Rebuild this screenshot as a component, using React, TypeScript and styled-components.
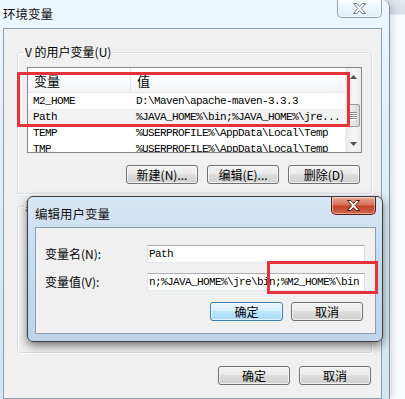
import React from "react";
import styled, { createGlobalStyle } from "styled-components";

const cjk = `"Noto Sans CJK SC", "Liberation Sans", sans-serif`;
const mono = `"Liberation Mono", "Noto Sans CJK SC", monospace`;

const GlobalStyle = createGlobalStyle`
  html, body {
    margin: 0;
    padding: 0;
  }
  body {
    width: 405px;
    height: 399px;
    overflow: hidden;
    font-family: ${cjk};
    font-size: 12px;
    color: #000;
  }
`;

const Desktop = styled.div`
  position: relative;
  width: 405px;
  height: 399px;
  overflow: hidden;
  background: linear-gradient(180deg, #e3e9ef 0, #d6dfe8 14px, #fbfcfd 15px);
`;

const Window = styled.div`
  width: 390px;
  height: 399px;
  box-sizing: border-box;
  padding: 0 7px 0 3px;
  display: flex;
  flex-direction: column;
  background: linear-gradient(180deg, #eef7fd 0%, #e2effa 30%, #d3e4f3 100%);
  border-right: 1px solid #7d8c9c;
  border-radius: 0 7px 0 0;
  box-shadow: 3px 0 6px rgba(0, 0, 0, 0.12);
`;

const TitleBar = styled.div<{ $height: number }>`
  height: ${(p) => p.$height}px;
  flex: none;
  display: flex;
  justify-content: space-between;
  align-items: flex-start;
`;

const Title = styled.div<{ $top: number }>`
  margin-top: ${(p) => p.$top}px;
  font-size: 12.5px;
  line-height: 14px;
  color: #111;
`;

const CloseButton = styled.div<{ $red?: boolean }>`
  width: 45px;
  height: 18px;
  box-sizing: border-box;
  display: flex;
  align-items: center;
  justify-content: center;
  border: 1px solid ${(p) => (p.$red ? "#5a1a10" : "#93a3b3")};
  border-top: none;
  border-radius: 0 0 5px 5px;
  background: ${(p) =>
    p.$red
      ? "linear-gradient(180deg, #e9a897 0%, #d7705a 45%, #c4452c 55%, #d0634a 100%)"
      : "linear-gradient(180deg, rgba(255,255,255,0.7) 0%, rgba(235,244,251,0.6) 50%, rgba(220,234,246,0.6) 100%)"};
  box-shadow: inset 0 0 0 1px rgba(255, 255, 255, 0.45);
`;

const Client = styled.div<{ $pad: string }>`
  flex: 1;
  min-height: 0;
  box-sizing: border-box;
  display: flex;
  flex-direction: column;
  background: #f0f0f0;
  border: 1px solid #8e9cab;
  padding: ${(p) => p.$pad};
`;

const GroupBox = styled.fieldset<{ $top: number }>`
  margin: ${(p) => p.$top}px 0 0;
  padding: 0;
  min-width: 0;
  border: 1px solid #d5dfe5;
  border-radius: 3px;
  box-shadow: inset 1px 1px 0 #fff, 1px 1px 0 #fff;
`;

const Legend = styled.legend`
  margin-left: 6px;
  padding: 0 1px;
  font-size: 12px;
  line-height: 14px;
`;

const ListBox = styled.div`
  margin: 8px 9px 0 9px;
  height: 86px;
  box-sizing: border-box;
  border: 1px solid #828790;
  background: #fff;
  display: grid;
  grid-template-columns: 1fr 16px;
  overflow: hidden;
`;

const ListBody = styled.div`
  display: flex;
  flex-direction: column;
  overflow: hidden;
`;

const HeaderRow = styled.div`
  height: 25px;
  flex: none;
  box-sizing: border-box;
  display: grid;
  grid-template-columns: 103px 1fr;
  align-items: center;
  background: linear-gradient(180deg, #ffffff 0%, #fafbfc 60%, #f2f3f5 100%);
  border-bottom: 1px solid #e2e4e7;
`;

const HeaderCell = styled.div<{ $sep?: boolean }>`
  height: 100%;
  display: flex;
  align-items: center;
  padding-left: 6px;
  font-size: 13px;
  box-sizing: border-box;
  border-right: ${(p) => (p.$sep ? "1px solid #e5e5e5" : "none")};
`;

const Row = styled.div<{ $selected?: boolean }>`
  height: 16px;
  flex: none;
  display: grid;
  grid-template-columns: 103px 1fr;
  align-items: center;
  background: ${(p) => (p.$selected ? "#f2f2f2" : "transparent")};
  font-family: ${mono};
  font-size: 11px;
  letter-spacing: -0.6px;
  white-space: nowrap;
`;

const Cell = styled.div`
  padding-left: 5px;
  overflow: hidden;
`;

const ScrollBar = styled.div`
  display: flex;
  flex-direction: column;
  background: linear-gradient(90deg, #e9e9e9, #f5f5f5 50%, #ececec);
  border-left: 1px solid #ededed;
`;

const ScrollArrow = styled.div`
  height: 17px;
  flex: none;
  display: flex;
  align-items: center;
  justify-content: center;
`;

const ScrollTrack = styled.div`
  flex: 1;
  padding-top: 19px;
`;

const Thumb = styled.div`
  height: 23px;
  margin: 0 1px;
  box-sizing: border-box;
  border: 1px solid #9a9a9a;
  border-radius: 2px;
  background: linear-gradient(90deg, #f4f4f4, #e6e6e6 50%, #d8d8d8);
  display: flex;
  flex-direction: column;
  align-items: center;
  justify-content: center;
  gap: 1px;
`;

const Grip = styled.div`
  width: 7px;
  height: 1px;
  background: #8a8a8a;
  box-shadow: 0 1px 0 #fff;
`;

const ButtonRow = styled.div<{ $top: number; $gap: number; $right: number }>`
  display: flex;
  justify-content: flex-end;
  gap: ${(p) => p.$gap}px;
  margin-top: ${(p) => p.$top}px;
  padding-right: ${(p) => p.$right}px;
`;

const Button = styled.div<{ $primary?: boolean; $width?: number }>`
  width: ${(p) => p.$width ?? 72}px;
  height: 19px;
  box-sizing: border-box;
  display: flex;
  align-items: center;
  justify-content: center;
  font-size: 12px;
  border-radius: 3px;
  border: 1px solid ${(p) => (p.$primary ? "#3c7fb1" : "#707070")};
  background: ${(p) =>
    p.$primary
      ? "linear-gradient(180deg, #eaf6fd 0%, #d9f0fc 45%, #bee6fd 50%, #a7d9f5 100%)"
      : "linear-gradient(180deg, #f2f2f2 0%, #ebebeb 45%, #dddddd 50%, #cfcfcf 100%)"};
  box-shadow: inset 0 0 0 1px rgba(255, 255, 255, 0.7);
  color: #000;
`;

const GroupSpacer = styled.div<{ $height: number }>`
  height: ${(p) => p.$height}px;
`;

const Dialog = styled.div`
  position: absolute;
  left: 27px;
  top: 196px;
  width: 356px;
  height: 146px;
  box-sizing: border-box;
  padding: 0 6px 7px 7px;
  display: flex;
  flex-direction: column;
  border: 1px solid #3c3c3c;
  border-radius: 6px;
  background: linear-gradient(180deg, #d8e7f5 0%, #c9dcef 40%, #bed4ea 100%);
  box-shadow: 0 4px 10px rgba(0, 0, 0, 0.5);
`;

const FieldRow = styled.div<{ $top?: number }>`
  display: grid;
  grid-template-columns: 102px 218px;
  align-items: center;
  height: 18px;
  margin-top: ${(p) => p.$top ?? 0}px;
`;

const Label = styled.div`
  font-size: 12px;
  line-height: 14px;
`;

const Input = styled.div`
  height: 18px;
  box-sizing: border-box;
  padding: 0 1px;
  border: 1px solid;
  border-color: #abadb3 #dbdfe6 #e3e9ef #e2e3ea;
  background: #fff;
  font-family: ${mono};
  font-size: 11px;
  letter-spacing: -0.6px;
  line-height: 16px;
  white-space: nowrap;
  overflow: hidden;
`;

const Highlight = styled.div<{ $x: number; $y: number; $w: number; $h: number }>`
  position: absolute;
  left: ${(p) => p.$x}px;
  top: ${(p) => p.$y}px;
  width: ${(p) => p.$w}px;
  height: ${(p) => p.$h}px;
  box-sizing: border-box;
  border: 3px solid #e5323b;
  pointer-events: none;
`;

const CloseGlyph: React.FC<{ stroke: string }> = ({ stroke }) => (
  <svg width="13" height="11" viewBox="0 0 13 11">
    <polygon
      points="0.5,0.5 3.8,0.5 6.5,3.4 9.2,0.5 12.5,0.5 8.3,5.5 12.5,10.5 9.2,10.5 6.5,7.6 3.8,10.5 0.5,10.5 4.7,5.5"
      fill="#fff"
      stroke={stroke}
      strokeWidth="1"
      strokeLinejoin="round"
    />
  </svg>
);

const Arrow: React.FC<{ down?: boolean }> = ({ down }) => (
  <svg width="7" height="4" viewBox="0 0 7 4">
    <polygon points={down ? "0,0 7,0 3.5,4" : "0,4 7,4 3.5,0"} fill="#4d4d4d" />
  </svg>
);

const rows = [
  { name: "M2_HOME", value: "D:\\Maven\\apache-maven-3.3.3" },
  { name: "Path", value: "%JAVA_HOME%\\bin;%JAVA_HOME%\\jre...", selected: true },
  { name: "TEMP", value: "%USERPROFILE%\\AppData\\Local\\Temp" },
  { name: "TMP", value: "%USERPROFILE%\\AppData\\Local\\Temp" },
];

const App: React.FC = () => {
  return (
    <Desktop>
      <GlobalStyle />
      <Window>
        <TitleBar $height={28}>
          <Title $top={7}>环境变量</Title>
          <CloseButton>
            <CloseGlyph stroke="#6d7c8c" />
          </CloseButton>
        </TitleBar>
        <Client $pad="0 9px 0 13px">
          <GroupBox $top={16}>
            <Legend>V 的用户变量(U)</Legend>
            <ListBox>
              <ListBody>
                <HeaderRow>
                  <HeaderCell $sep>变量</HeaderCell>
                  <HeaderCell>值</HeaderCell>
                </HeaderRow>
                {rows.map((r) => (
                  <Row key={r.name} $selected={r.selected}>
                    <Cell>{r.name}</Cell>
                    <Cell>{r.value}</Cell>
                  </Row>
                ))}
              </ListBody>
              <ScrollBar>
                <ScrollArrow>
                  <Arrow />
                </ScrollArrow>
                <ScrollTrack>
                  <Thumb>
                    <Grip />
                    <Grip />
                    <Grip />
                    <Grip />
                  </Thumb>
                </ScrollTrack>
                <ScrollArrow>
                  <Arrow down />
                </ScrollArrow>
              </ScrollBar>
            </ListBox>
            <ButtonRow $top={12} $gap={9} $right={11}>
              <Button>新建(N)...</Button>
              <Button>编辑(E)...</Button>
              <Button>删除(D)</Button>
            </ButtonRow>
            <GroupSpacer $height={9} />
          </GroupBox>
          <GroupBox $top={5}>
            <Legend>系统变量(S)</Legend>
            <GroupSpacer $height={139} />
          </GroupBox>
          <ButtonRow $top={13} $gap={9} $right={1}>
            <Button>确定</Button>
            <Button>取消</Button>
          </ButtonRow>
        </Client>
      </Window>

      <Dialog>
        <TitleBar $height={30}>
          <Title $top={10}>编辑用户变量</Title>
          <CloseButton $red>
            <CloseGlyph stroke="#5a1d12" />
          </CloseButton>
        </TitleBar>
        <Client $pad="17px 10px 12px 9px">
          <FieldRow>
            <Label>变量名(N):</Label>
            <Input>Path</Input>
          </FieldRow>
          <FieldRow $top={10}>
            <Label>变量值(V):</Label>
            <Input>n;%JAVA_HOME%\jre\bin;%M2_HOME%\bin</Input>
          </FieldRow>
          <ButtonRow $top={11} $gap={8} $right={2}>
            <Button $primary $width={73}>
              确定
            </Button>
            <Button>取消</Button>
          </ButtonRow>
        </Client>
      </Dialog>

      <Highlight $x={17} $y={72} $w={333} $h={55} />
      <Highlight $x={267} $y={261} $w={111} $h={33} />
    </Desktop>
  );
};

export default App;
